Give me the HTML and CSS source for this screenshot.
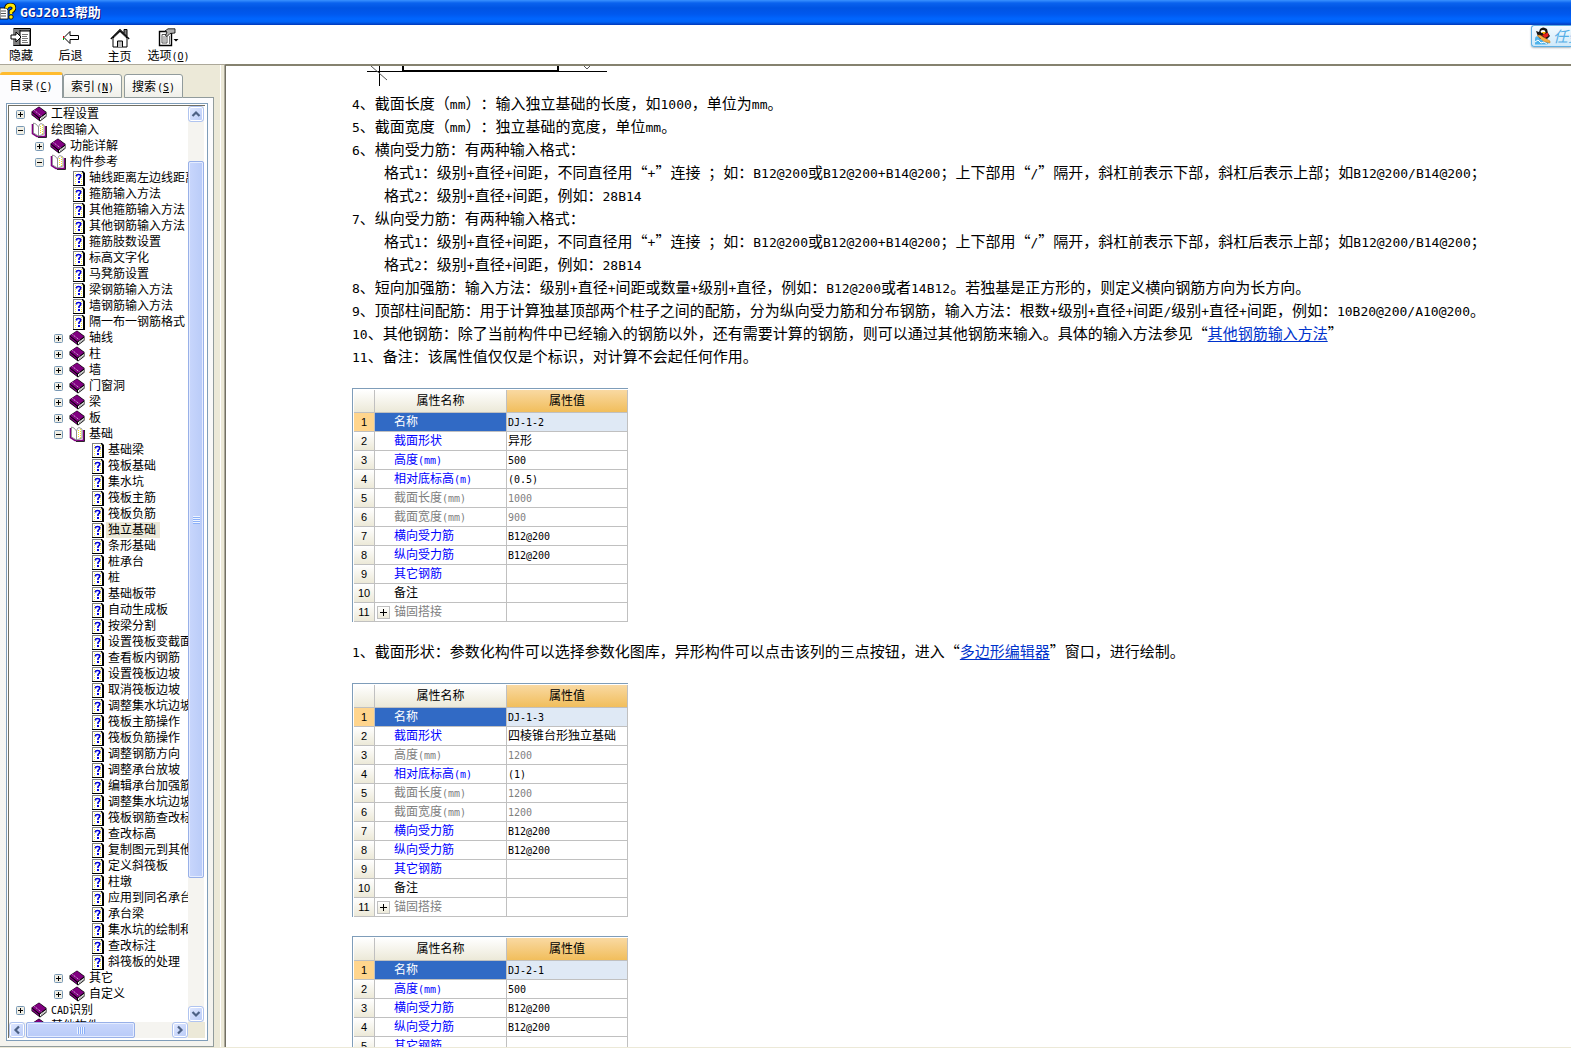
FILE: index.html
```html
<!DOCTYPE html>
<html lang="zh-CN">
<head>
<meta charset="utf-8">
<title>GGJ2013帮助</title>
<link rel="stylesheet" href="styles.css">
</head>
<body>
<svg class="defs" aria-hidden="true">
  <symbol id="book" viewBox="0 0 16 16">
    <path d="M8 0.5 L15.5 6 V10.5 L9 15.5 L0.5 9 V5.5 Z" fill="#000"/>
    <path d="M8 1 L15 6.5 L8.5 11.5 L1 5.5 Z" fill="#800080"/>
    <path d="M1 6.5 L8 12.5 V14 L1 8.5 Z" fill="#800080"/>
    <path d="M9 12.2 L15 8 V10 L9 14.4 Z" fill="#fff"/>
    <path d="M10 13 L15 9.3" stroke="#808080" stroke-width=".7"/>
    <path d="M3.5 4.5 L10.5 10" stroke="#fff" stroke-width=".8" stroke-dasharray="1 1"/>
  </symbol>
  <symbol id="open" viewBox="0 0 16 16">
    <path d="M1.5 2 V11.5 L6 14.5 H14.5 V4" fill="none" stroke="#800080" stroke-width="1.6"/>
    <path d="M2.5 1 L5 2 L7.5 5 V14 L2.5 11 Z" fill="#fff" stroke="#808080" stroke-width=".8"/>
    <path d="M7.5 5 L8.5 2.5 L10 1.5 L13 3 V12 L7.5 14 Z" fill="#fff" stroke="#808080" stroke-width=".8"/>
    <path d="M9.5 4 V12 M11.5 3 V12" stroke="#f5e625" stroke-dasharray="1 1"/>
    <path d="M15.5 4 V15.5 H7" fill="none" stroke="#000" stroke-width=".8"/>
  </symbol>
  <symbol id="topic" viewBox="0 0 12 15">
    <path d="M0 0 H10 L12 2 V15 H0 Z" fill="#000"/>
    <path d="M0 0 H9 V1 H1 V14 H0 Z" fill="#808080"/>
    <path d="M1 1 H9 L10 2.5 V14 H1 Z" fill="#fff"/>
    <path d="M2.5 2 V13 M8.5 2 V13" stroke="#ffee30" stroke-dasharray="1 1"/>
    <path d="M3.5 5.5 V4.5 Q3.5 3.5 5.5 3.5 Q7.8 3.5 7.8 5 Q7.8 6 6 7.5 V9" fill="none" stroke="#0000d8" stroke-width="1.6"/>
    <path d="M5 10 H7 V12 H5 Z" fill="#0000d8"/>
  </symbol>
  <symbol id="plus" viewBox="0 0 9 9">
    <rect x=".5" y=".5" width="8" height="8" rx="1" fill="#f0eee4" stroke="#7898b5"/>
    <path d="M2 4.5 H7 M4.5 2 V7" stroke="#000"/>
  </symbol>
  <symbol id="minus" viewBox="0 0 9 9">
    <rect x=".5" y=".5" width="8" height="8" rx="1" fill="#f0eee4" stroke="#7898b5"/>
    <path d="M2 4.5 H7" stroke="#000"/>
  </symbol>
  <symbol id="chev" viewBox="0 0 10 10">
    <path d="M1.5 7 L5 3.5 L8.5 7" fill="none" stroke="#4d6185" stroke-width="2.2"/>
  </symbol>
</svg>
<div class="app">
  <header class="titlebar">
    <svg class="title-icon" width="16" height="18" viewBox="0 0 16 18">
      <path d="M0 5 H6 L8 7 V16 H0 Z" fill="#fff" stroke="#000" stroke-width=".8"/>
      <path d="M1 8 H6 M1 10.5 H6 M1 13 H6" stroke="#555"/>
      <path d="M6.5 5.5 Q6.5 2 10.5 2 Q14 2 14 5 Q14 7 11 8.5 V11" fill="none" stroke="#000" stroke-width="4.4"/>
      <path d="M6.5 5.5 Q6.5 2 10.5 2 Q14 2 14 5 Q14 7 11 8.5 V11" fill="none" stroke="#ffe600" stroke-width="2.8"/>
      <circle cx="11" cy="14" r="2.2" fill="#ffe600" stroke="#000" stroke-width=".8"/>
    </svg>
    <h1 class="title"><span class="en">GGJ2013</span>帮助</h1>
  </header>

  <nav class="toolbar">
    <button class="tool first">
      <svg width="22" height="19" viewBox="0 0 22 19">
        <path d="M3 1 H10 V18 H3 Z" fill="#808080"/>
        <path d="M3.5 .5 H20.5 V17.5 H3.5" fill="none" stroke="#000"/>
        <path d="M10 2 H20 V17 H10 Z" fill="#fff" stroke="#000"/>
        <path d="M10 3 H20" stroke="#000"/>
        <path d="M12 6.5 H18 M12 8.5 H17 M12 10.5 H18 M12 12.5 H17 M12 14.5 H18" stroke="#777"/>
        <path d="M1 7 H6 V4 L11 9 L6 14 V11 H1 Z" fill="#fff" stroke="#000"/>
      </svg>
      <span>隐藏</span>
    </button>
    <button class="tool">
      <svg width="18" height="19" viewBox="0 0 18 19">
        <path d="M2 9.5 L8 3.5 V7.5 H16.5 V11.5 H8 V15.5 Z" fill="#fff" stroke="#000"/>
        <path d="M1.5 8 V10" stroke="#d00"/><path d="M1.5 10 V12" stroke="#0a0"/>
      </svg>
      <span>后退</span>
    </button>
    <button class="tool">
      <svg width="20" height="20" viewBox="0 0 20 20">
        <path d="M14 5 V1.5 H17 V8" fill="#808080" stroke="#000"/>
        <path d="M3 10 L10 3 L17 10 V19 H3 Z" fill="#fff" stroke="#000"/>
        <path d="M.8 11 L10 1.5 L19.2 11" fill="none" stroke="#000" stroke-width="1.2"/>
        <path d="M7.5 19 V13 H12.5 V19" fill="#c0c0c0" stroke="#000"/>
        <path d="M4 9.5 L10 4 L16 9.5" fill="none" stroke="#808080"/>
      </svg>
      <span>主页</span>
    </button>
    <button class="tool">
      <svg width="22" height="19" viewBox="0 0 22 19">
        <path d="M1.5 3.5 H13.5 V17.5 H1.5 Z" fill="#fff" stroke="#000" stroke-width="1.4"/>
        <path d="M4 6.5 H9 V15 H4 Z" fill="#fff" stroke="#555"/>
        <path d="M5 9 H8 M5 11 H8 M5 13 H8 M11.5 8 V16" stroke="#777"/>
        <path d="M7 3 L10 .8 H17 V5 L12 5.5 L9 8.5 L7.5 7.5 L9 4 Z" fill="#b0b0b0" stroke="#000" stroke-width=".8"/>
        <path d="M15.5 11 H20.5 L18 13.5 Z" fill="#000"/>
      </svg>
      <span>选项<span class="en">(<u>O</u>)</span></span>
    </button>
  </nav>

  <button class="qq-badge">
    <svg width="17" height="18" viewBox="0 0 17 18">
      <path d="M2 4 L5 5 L6 2 Q9 -1 13 2 L14 6 L16 9 L13 12 H5 Z" fill="#151515"/>
      <ellipse cx="9" cy="4.5" rx="2.4" ry="1.5" fill="#fff"/>
      <path d="M7.5 5 H12 L10 7.5 Z" fill="#ffb000"/>
      <path d="M8 8 L14 5.5 L14.5 9 L11 11 Z" fill="#e8201c"/>
      <path d="M1 12 Q1 8.5 4 9.5 Q7 14 16 15 L13 17.5 H1 Z" fill="#4fb3ea"/>
      <path d="M3 8.5 Q6 7 9 10 L16 14 V16 L10 14.5 Z" fill="#f6b04a" stroke="#c97a1a" stroke-width=".5"/>
      <path d="M1 15 L4 13 L7 16 L10 15 L13 17" fill="none" stroke="#fff"/>
    </svg>
    <span>任务</span>
  </button>

  <div class="main">
    <aside class="sidebar">
      <div class="tabs">
        <button class="tab active">目录<span class="en">(<u>C</u>)</span></button>
        <button class="tab">索引<span class="en">(<u>N</u>)</span></button>
        <button class="tab">搜索<span class="en">(<u>S</u>)</span></button>
        <span class="tab-rest"></span>
      </div>
      <div class="panel">
        <div class="frame">
          <div class="tree-box">
            <ul class="tree">
              <li><div class="row"><svg class="ex"><use href="#plus"/></svg><svg class="ic"><use href="#book"/></svg><span class="lb">工程设置</span></div></li>
              <li><div class="row"><svg class="ex"><use href="#minus"/></svg><svg class="ic"><use href="#open"/></svg><span class="lb">绘图输入</span></div>
                <ul>
                  <li><div class="row"><svg class="ex"><use href="#plus"/></svg><svg class="ic"><use href="#book"/></svg><span class="lb">功能详解</span></div></li>
                  <li><div class="row"><svg class="ex"><use href="#minus"/></svg><svg class="ic"><use href="#open"/></svg><span class="lb">构件参考</span></div>
                    <ul>
                      <li><div class="row"><svg class="tp"><use href="#topic"/></svg><span class="lb">轴线距离左边线距离</span></div></li>
                      <li><div class="row"><svg class="tp"><use href="#topic"/></svg><span class="lb">箍筋输入方法</span></div></li>
                      <li><div class="row"><svg class="tp"><use href="#topic"/></svg><span class="lb">其他箍筋输入方法</span></div></li>
                      <li><div class="row"><svg class="tp"><use href="#topic"/></svg><span class="lb">其他钢筋输入方法</span></div></li>
                      <li><div class="row"><svg class="tp"><use href="#topic"/></svg><span class="lb">箍筋肢数设置</span></div></li>
                      <li><div class="row"><svg class="tp"><use href="#topic"/></svg><span class="lb">标高文字化</span></div></li>
                      <li><div class="row"><svg class="tp"><use href="#topic"/></svg><span class="lb">马凳筋设置</span></div></li>
                      <li><div class="row"><svg class="tp"><use href="#topic"/></svg><span class="lb">梁钢筋输入方法</span></div></li>
                      <li><div class="row"><svg class="tp"><use href="#topic"/></svg><span class="lb">墙钢筋输入方法</span></div></li>
                      <li><div class="row"><svg class="tp"><use href="#topic"/></svg><span class="lb">隔一布一钢筋格式</span></div></li>
                      <li><div class="row"><svg class="ex"><use href="#plus"/></svg><svg class="ic"><use href="#book"/></svg><span class="lb">轴线</span></div></li>
                      <li><div class="row"><svg class="ex"><use href="#plus"/></svg><svg class="ic"><use href="#book"/></svg><span class="lb">柱</span></div></li>
                      <li><div class="row"><svg class="ex"><use href="#plus"/></svg><svg class="ic"><use href="#book"/></svg><span class="lb">墙</span></div></li>
                      <li><div class="row"><svg class="ex"><use href="#plus"/></svg><svg class="ic"><use href="#book"/></svg><span class="lb">门窗洞</span></div></li>
                      <li><div class="row"><svg class="ex"><use href="#plus"/></svg><svg class="ic"><use href="#book"/></svg><span class="lb">梁</span></div></li>
                      <li><div class="row"><svg class="ex"><use href="#plus"/></svg><svg class="ic"><use href="#book"/></svg><span class="lb">板</span></div></li>
                      <li><div class="row"><svg class="ex"><use href="#minus"/></svg><svg class="ic"><use href="#open"/></svg><span class="lb">基础</span></div>
                        <ul>
                          <li><div class="row"><svg class="tp"><use href="#topic"/></svg><span class="lb">基础梁</span></div></li>
                          <li><div class="row"><svg class="tp"><use href="#topic"/></svg><span class="lb">筏板基础</span></div></li>
                          <li><div class="row"><svg class="tp"><use href="#topic"/></svg><span class="lb">集水坑</span></div></li>
                          <li><div class="row"><svg class="tp"><use href="#topic"/></svg><span class="lb">筏板主筋</span></div></li>
                          <li><div class="row"><svg class="tp"><use href="#topic"/></svg><span class="lb">筏板负筋</span></div></li>
                          <li><div class="row"><svg class="tp"><use href="#topic"/></svg><span class="lb selected">独立基础</span></div></li>
                          <li><div class="row"><svg class="tp"><use href="#topic"/></svg><span class="lb">条形基础</span></div></li>
                          <li><div class="row"><svg class="tp"><use href="#topic"/></svg><span class="lb">桩承台</span></div></li>
                          <li><div class="row"><svg class="tp"><use href="#topic"/></svg><span class="lb">桩</span></div></li>
                          <li><div class="row"><svg class="tp"><use href="#topic"/></svg><span class="lb">基础板带</span></div></li>
                          <li><div class="row"><svg class="tp"><use href="#topic"/></svg><span class="lb">自动生成板</span></div></li>
                          <li><div class="row"><svg class="tp"><use href="#topic"/></svg><span class="lb">按梁分割</span></div></li>
                          <li><div class="row"><svg class="tp"><use href="#topic"/></svg><span class="lb">设置筏板变截面</span></div></li>
                          <li><div class="row"><svg class="tp"><use href="#topic"/></svg><span class="lb">查看板内钢筋</span></div></li>
                          <li><div class="row"><svg class="tp"><use href="#topic"/></svg><span class="lb">设置筏板边坡</span></div></li>
                          <li><div class="row"><svg class="tp"><use href="#topic"/></svg><span class="lb">取消筏板边坡</span></div></li>
                          <li><div class="row"><svg class="tp"><use href="#topic"/></svg><span class="lb">调整集水坑边坡</span></div></li>
                          <li><div class="row"><svg class="tp"><use href="#topic"/></svg><span class="lb">筏板主筋操作</span></div></li>
                          <li><div class="row"><svg class="tp"><use href="#topic"/></svg><span class="lb">筏板负筋操作</span></div></li>
                          <li><div class="row"><svg class="tp"><use href="#topic"/></svg><span class="lb">调整钢筋方向</span></div></li>
                          <li><div class="row"><svg class="tp"><use href="#topic"/></svg><span class="lb">调整承台放坡</span></div></li>
                          <li><div class="row"><svg class="tp"><use href="#topic"/></svg><span class="lb">编辑承台加强筋</span></div></li>
                          <li><div class="row"><svg class="tp"><use href="#topic"/></svg><span class="lb">调整集水坑边坡</span></div></li>
                          <li><div class="row"><svg class="tp"><use href="#topic"/></svg><span class="lb">筏板钢筋查改标</span></div></li>
                          <li><div class="row"><svg class="tp"><use href="#topic"/></svg><span class="lb">查改标高</span></div></li>
                          <li><div class="row"><svg class="tp"><use href="#topic"/></svg><span class="lb">复制图元到其他</span></div></li>
                          <li><div class="row"><svg class="tp"><use href="#topic"/></svg><span class="lb">定义斜筏板</span></div></li>
                          <li><div class="row"><svg class="tp"><use href="#topic"/></svg><span class="lb">柱墩</span></div></li>
                          <li><div class="row"><svg class="tp"><use href="#topic"/></svg><span class="lb">应用到同名承台</span></div></li>
                          <li><div class="row"><svg class="tp"><use href="#topic"/></svg><span class="lb">承台梁</span></div></li>
                          <li><div class="row"><svg class="tp"><use href="#topic"/></svg><span class="lb">集水坑的绘制和</span></div></li>
                          <li><div class="row"><svg class="tp"><use href="#topic"/></svg><span class="lb">查改标注</span></div></li>
                          <li><div class="row"><svg class="tp"><use href="#topic"/></svg><span class="lb">斜筏板的处理</span></div></li>
                        </ul>
                      </li>
                      <li><div class="row"><svg class="ex"><use href="#plus"/></svg><svg class="ic"><use href="#book"/></svg><span class="lb">其它</span></div></li>
                      <li><div class="row"><svg class="ex"><use href="#plus"/></svg><svg class="ic"><use href="#book"/></svg><span class="lb">自定义</span></div></li>
                    </ul>
                  </li>
                </ul>
              </li>
              <li><div class="row"><svg class="ex"><use href="#plus"/></svg><svg class="ic"><use href="#book"/></svg><span class="lb"><span class="en">CAD</span>识别</span></div></li>
              <li><div class="row"><svg class="ex"><use href="#plus"/></svg><svg class="ic"><use href="#book"/></svg><span class="lb">其他构件</span></div></li>
            </ul>
            <div class="vbar">
              <button class="sb" aria-label="向上"><svg width="10" height="10"><use href="#chev"/></svg></button>
              <span class="v-before"></span>
              <span class="v-thumb"><i class="grip"></i></span>
              <span class="v-after"></span>
              <button class="sb down" aria-label="向下"><svg width="10" height="10"><use href="#chev"/></svg></button>
            </div>
            <div class="hbar">
              <button class="sb left" aria-label="向左"><svg width="10" height="10"><use href="#chev"/></svg></button>
              <span class="h-thumb"><i class="grip side"></i></span>
              <span class="h-after"></span>
              <button class="sb right" aria-label="向右"><svg width="10" height="10"><use href="#chev"/></svg></button>
            </div>
            <div class="corner"></div>
          </div>
        </div>
      </div>
    </aside>
    <div class="splitter"></div>

    <main class="doc">
      <svg class="diagram" width="256" height="25" viewBox="0 0 256 25">
        <path d="M15 5.5 H255" stroke="#000"/>
        <path d="M27.5 0 V20" stroke="#000"/>
        <path d="M19 0 L35 14" stroke="#555"/>
        <path d="M51 0 V5 H206 V0" fill="none" stroke="#000" stroke-width="2"/>
        <path d="M232 0 L235 3 L238 0" fill="none" stroke="#555"/>
      </svg>
      <p><span class="en">4</span>、截面长度（<span class="en">mm</span>）：输入独立基础的长度，如<span class="en">1000</span>，单位为<span class="en">mm</span>。</p>
      <p><span class="en">5</span>、截面宽度（<span class="en">mm</span>）：独立基础的宽度，单位<span class="en">mm</span>。</p>
      <p><span class="en">6</span>、横向受力筋：有两种输入格式：</p>
      <p class="sub">格式<span class="en">1</span>：级别<span class="en">+</span>直径<span class="en">+</span>间距，不同直径用“<span class="en">+</span>”连接<span class="en"> </span>；如：<span class="en">B12@200</span>或<span class="en">B12@200+B14@200</span>；上下部用“<span class="en">/</span>”隔开，斜杠前表示下部，斜杠后表示上部；如<span class="en">B12@200/B14@200</span>；</p>
      <p class="sub">格式<span class="en">2</span>：级别<span class="en">+</span>直径<span class="en">+</span>间距，例如：<span class="en">28B14</span></p>
      <p><span class="en">7</span>、纵向受力筋：有两种输入格式：</p>
      <p class="sub">格式<span class="en">1</span>：级别<span class="en">+</span>直径<span class="en">+</span>间距，不同直径用“<span class="en">+</span>”连接<span class="en"> </span>；如：<span class="en">B12@200</span>或<span class="en">B12@200+B14@200</span>；上下部用“<span class="en">/</span>”隔开，斜杠前表示下部，斜杠后表示上部；如<span class="en">B12@200/B14@200</span>；</p>
      <p class="sub">格式<span class="en">2</span>：级别<span class="en">+</span>直径<span class="en">+</span>间距，例如：<span class="en">28B14</span></p>
      <p><span class="en">8</span>、短向加强筋：输入方法：级别<span class="en">+</span>直径<span class="en">+</span>间距或数量<span class="en">+</span>级别<span class="en">+</span>直径，例如：<span class="en">B12@200</span>或者<span class="en">14B12</span>。若独基是正方形的，则定义横向钢筋方向为长方向。</p>
      <p><span class="en">9</span>、顶部柱间配筋：用于计算独基顶部两个柱子之间的配筋，分为纵向受力筋和分布钢筋，输入方法：根数<span class="en">+</span>级别<span class="en">+</span>直径<span class="en">+</span>间距<span class="en">/</span>级别<span class="en">+</span>直径<span class="en">+</span>间距，例如：<span class="en">10B20@200/A10@200</span>。</p>
      <p><span class="en">10</span>、其他钢筋：除了当前构件中已经输入的钢筋以外，还有需要计算的钢筋，则可以通过其他钢筋来输入。具体的输入方法参见“<a href="#rebar">其他钢筋输入方法</a>”</p>
      <p><span class="en">11</span>、备注：该属性值仅仅是个标识，对计算不会起任何作用。</p>

      <table class="props">
        <colgroup><col class="c-num"><col class="c-name"><col class="c-val"></colgroup>
        <thead><tr><th></th><th>属性名称</th><th class="vh">属性值</th></tr></thead>
        <tbody>
          <tr class="cur"><th>1</th><td>名称</td><td><span class="en">DJ-1-2</span></td></tr>
          <tr class="key"><th>2</th><td>截面形状</td><td>异形</td></tr>
          <tr class="key"><th>3</th><td>高度<span class="en">(mm)</span></td><td><span class="en">500</span></td></tr>
          <tr class="key"><th>4</th><td>相对底标高<span class="en">(m)</span></td><td><span class="en">(0.5)</span></td></tr>
          <tr class="off"><th>5</th><td>截面长度<span class="en">(mm)</span></td><td><span class="en">1000</span></td></tr>
          <tr class="off"><th>6</th><td>截面宽度<span class="en">(mm)</span></td><td><span class="en">900</span></td></tr>
          <tr class="key"><th>7</th><td>横向受力筋</td><td><span class="en">B12@200</span></td></tr>
          <tr class="key"><th>8</th><td>纵向受力筋</td><td><span class="en">B12@200</span></td></tr>
          <tr class="key"><th>9</th><td>其它钢筋</td><td></td></tr>
          <tr><th>10</th><td>备注</td><td></td></tr>
          <tr class="off group"><th>11</th><td><button class="exp" aria-label="展开"></button>锚固搭接</td><td></td></tr>
        </tbody>
      </table>

      <p class="note"><span class="en">1</span>、截面形状：参数化构件可以选择参数化图库，异形构件可以点击该列的三点按钮，进入“<a href="#polygon">多边形编辑器</a>”窗口，进行绘制。</p>

      <table class="props">
        <colgroup><col class="c-num"><col class="c-name"><col class="c-val"></colgroup>
        <thead><tr><th></th><th>属性名称</th><th class="vh">属性值</th></tr></thead>
        <tbody>
          <tr class="cur"><th>1</th><td>名称</td><td><span class="en">DJ-1-3</span></td></tr>
          <tr class="key"><th>2</th><td>截面形状</td><td>四棱锥台形独立基础</td></tr>
          <tr class="off"><th>3</th><td>高度<span class="en">(mm)</span></td><td><span class="en">1200</span></td></tr>
          <tr class="key"><th>4</th><td>相对底标高<span class="en">(m)</span></td><td><span class="en">(1)</span></td></tr>
          <tr class="off"><th>5</th><td>截面长度<span class="en">(mm)</span></td><td><span class="en">1200</span></td></tr>
          <tr class="off"><th>6</th><td>截面宽度<span class="en">(mm)</span></td><td><span class="en">1200</span></td></tr>
          <tr class="key"><th>7</th><td>横向受力筋</td><td><span class="en">B12@200</span></td></tr>
          <tr class="key"><th>8</th><td>纵向受力筋</td><td><span class="en">B12@200</span></td></tr>
          <tr class="key"><th>9</th><td>其它钢筋</td><td></td></tr>
          <tr><th>10</th><td>备注</td><td></td></tr>
          <tr class="off group"><th>11</th><td><button class="exp" aria-label="展开"></button>锚固搭接</td><td></td></tr>
        </tbody>
      </table>

      <table class="props">
        <colgroup><col class="c-num"><col class="c-name"><col class="c-val"></colgroup>
        <thead><tr><th></th><th>属性名称</th><th class="vh">属性值</th></tr></thead>
        <tbody>
          <tr class="cur"><th>1</th><td>名称</td><td><span class="en">DJ-2-1</span></td></tr>
          <tr class="key"><th>2</th><td>高度<span class="en">(mm)</span></td><td><span class="en">500</span></td></tr>
          <tr class="key"><th>3</th><td>横向受力筋</td><td><span class="en">B12@200</span></td></tr>
          <tr class="key"><th>4</th><td>纵向受力筋</td><td><span class="en">B12@200</span></td></tr>
          <tr class="key"><th>5</th><td>其它钢筋</td><td></td></tr>
        </tbody>
      </table>
    </main>
  </div>
</div>
</body>
</html>
```
FILE: styles.css
```css
* { box-sizing: border-box; }

body {
  margin: 0;
  font: 12px/16px "Noto Sans CJK SC", sans-serif;
  color: #000;
  text-spacing-trim: space-all;
}

button {
  margin: 0;
  padding: 0;
  border: 0;
  background: none;
  font: inherit;
  color: inherit;
}

ul { list-style: none; margin: 0; padding: 0; }
svg { display: block; flex: none; }
.defs { position: absolute; width: 0; height: 0; }

/* Latin runs set half as wide as the Chinese characters */
.en {
  font-family: "DejaVu Sans Mono", monospace;
  font-size: 10px;
  line-height: 1;
  white-space: pre;
}

.app {
  display: flex;
  flex-direction: column;
  height: 100vh;
  overflow: hidden;
  padding-bottom: 1px;
  background: #ece9d8;
}

/* title bar */
.titlebar {
  display: flex;
  align-items: center;
  gap: 4px;
  flex: none;
  height: 25px;
  padding-bottom: 2px;
  background: linear-gradient(#3a92ff 0, #0a62ee 3px, #0054e3 8px, #0058ee 14px, #0066ff 19px, #0062f5 22px, #0036b8 25px);
}
.title {
  margin: 0;
  font-size: 13px;
  line-height: 16px;
  font-weight: bold;
  color: #fff;
  text-shadow: 1px 1px 0 #0a1883;
}
.title .en { font-size: 13px; }

/* toolbar */
.toolbar {
  display: flex;
  flex: none;
  height: 39px;
  background: #fff;
}
.tool {
  display: flex;
  flex-direction: column;
  align-items: center;
  justify-content: space-between;
  width: 49px;
  padding: 3px 0 2px;
  white-space: nowrap;
}
.tool.first { width: 46px; padding-right: 4px; }

.qq-badge {
  position: absolute;
  top: 25px;
  right: 0;
  display: flex;
  align-items: center;
  gap: 2px;
  width: 40px;
  height: 22px;
  padding-left: 2px;
  overflow: hidden;
  border: 1px solid #5fb0e4;
  border-right: 0;
  border-radius: 3px 0 0 3px;
  background: linear-gradient(#f4fbff, #cfe9fa);
  box-shadow: 0 1px 2px #a9b4bc;
  font-size: 15px;
  font-style: italic;
  color: #55aee6;
  white-space: nowrap;
}

.main { display: flex; flex: 1; min-height: 0; }

/* navigation pane */
.sidebar {
  display: flex;
  flex-direction: column;
  flex: none;
  width: 214px;
  border-top: 1px solid #aca899;
  padding-top: 7px;
}
.tabs { display: flex; align-items: flex-end; flex: none; height: 26px; }
.tab {
  width: 59px;
  height: 24px;
  margin-right: 2px;
  border: 1px solid #919b9c;
  border-radius: 3px 3px 0 0;
  background: linear-gradient(#fff, #f0f0ea);
  white-space: nowrap;
}
.tab.active {
  width: 63px;
  height: 26px;
  margin-right: 0;
  padding: 0 0 4px;
  border-width: 3px 1px 0 0;
  border-top-color: #ffbb2e;
  background: #fcfcfe;
}
.tab-rest { flex: 1; margin-left: -2px; border-bottom: 1px solid #919b9c; }
.tab .en { margin-left: 1px; }

.panel {
  display: flex;
  flex: 1;
  min-height: 0;
  padding: 5px 5px 5px 6px;
  border: 1px solid #919b9c;
  border-width: 0 1px 1px 0;
  background: linear-gradient(#fcfcfe, #f4f3ee);
}
.frame {
  display: flex;
  flex: 1;
  padding: 1px 2px 2px 1px;
  border: 1px solid #7f9db9;
  background: #fff;
}
.tree-box {
  display: grid;
  grid-template: minmax(0, 1fr) 16px / minmax(0, 1fr) 17px;
  flex: 1;
  border: 1px solid #716f64;
  border-width: 1px 0 0 1px;
}
.tree { overflow: hidden; padding-left: 7px; white-space: nowrap; }
.tree ul { padding-left: 19px; }
.row { display: flex; align-items: center; height: 16px; }
.ex { width: 9px; height: 9px; margin-right: 6px; }
.ic { width: 16px; height: 16px; margin-right: 2px; }
.tp { width: 12px; height: 15px; margin: 0 2px 0 19px; }
.lb { height: 16px; padding: 0 4px 0 2px; line-height: 14px; }
.selected { background: #ece9d8; }

/* scroll bars */
.vbar, .hbar { display: flex; background: #f5f4f0; }
.vbar { flex-direction: column; width: 16px; }
.hbar { gap: 1px; }
.sb {
  display: flex;
  align-items: center;
  justify-content: center;
  flex: none;
  width: 16px;
  height: 16px;
  border: 1px solid #b0c4f0;
  border-radius: 3px;
  background: linear-gradient(135deg, #e0e8ff, #b9cbf8);
  box-shadow: inset 0 0 0 1px #fff;
}
.down svg { transform: rotate(180deg); }
.left svg { transform: rotate(-90deg); }
.right svg { transform: rotate(90deg); }
.v-before { flex: 39; }
.v-after { flex: 128; }
.v-thumb, .h-thumb {
  display: flex;
  align-items: center;
  justify-content: center;
  border: 1px solid #98b0e8;
  border-radius: 2px;
  box-shadow: inset 0 0 0 1px #e4ecff;
}
.v-thumb { flex: 715; background: linear-gradient(90deg, #c8d6fc, #b9cbf8); }
.h-thumb { flex: 109; background: linear-gradient(#c8d6fc, #b9cbf8); }
.h-after { flex: 35; }
.grip { width: 7px; height: 8px; background: repeating-linear-gradient(#eef4ff 0 1px, #8cb0f8 1px 2px); }
.grip.side { width: 8px; height: 7px; background: repeating-linear-gradient(90deg, #eef4ff 0 1px, #8cb0f8 1px 2px); }
.corner { background: #ece9d8; }

.splitter {
  flex: none;
  width: 12px;
  border-right: 1px solid #716f64;
  border-top: 1px solid #aca899;
  background: linear-gradient(90deg, #ece9d8 6px, #fff 6px 7px, #ece9d8 7px 10px, #aca899 10px);
}

/* help topic */
.doc {
  flex: 1;
  min-width: 0;
  overflow: hidden;
  padding-left: 126px;
  border-top: 2px solid #85826f;
  background: #fff;
}
.doc p {
  margin: 0;
  font-size: 15px;
  line-height: 23px;
}
.doc p .en { font-size: 13px; }
.doc .sub { padding-left: 32px; }
.doc a { color: #0033cc; text-underline-offset: 2px; }

.props {
  table-layout: fixed;
  width: 276px;
  margin: 21px 0 17px;
  padding: 1px 0 0 1px;
  border: 1px solid #7f9db9;
  border-width: 1px 0 0 1px;
  border-spacing: 0;
  line-height: 16px;
}
.props + .props { margin-top: 19px; }
.c-num { width: 21px; }
.c-name { width: 132px; }
.c-val { width: 121px; }
.props th, .props td {
  height: 19px;
  padding: 0 0 2px;
  border: 1px solid #c0c0c0;
  border-width: 0 1px 1px 0;
  font-weight: normal;
  white-space: nowrap;
}
.props th { background: linear-gradient(#fff, #ece9d8); }
.props thead th { height: 23px; }
.props .vh { background: linear-gradient(#f9d9a2, #f1be5c); }
.props tbody th { padding-bottom: 0; font-family: "Liberation Sans", sans-serif; font-size: 11px; }
.props td { padding-left: 1px; }
.props td:nth-child(2) { padding-left: 19px; }
.key td:nth-child(2) { color: #00f; }
.off td { color: #808080; }
.props .cur th { background: #ffd58d; }
.props .cur td { background: #dfe9f5; }
.props .cur td:nth-child(2) { background: #316ac5; color: #fff; }
.props .group td:nth-child(2) { padding-left: 2px; }

.exp {
  width: 13px;
  height: 13px;
  margin-right: 4px;
  vertical-align: middle;
  border: 1px solid #c0c0c0;
  background:
    linear-gradient(#000, #000) center / 7px 1px no-repeat,
    linear-gradient(#000, #000) center / 1px 7px no-repeat,
    linear-gradient(#fff, #ece9d8);
}
```
